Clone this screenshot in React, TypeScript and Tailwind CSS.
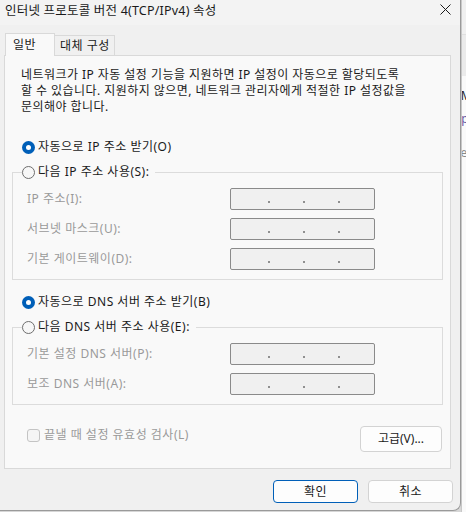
import React from "react";

const font = "font-['Segoe_UI','Noto_Sans','Noto_Sans_CJK_KR',sans-serif]";

function Radio({ checked }: { checked?: boolean }) {
  return checked ? (
    <span className="w-[13px] h-[13px] rounded-full bg-[#005fb8] flex items-center justify-center shrink-0">
      <span className="w-[5px] h-[5px] rounded-full bg-white" />
    </span>
  ) : (
    <span className="w-[13px] h-[13px] rounded-full border border-[#6e6e6e] bg-[#f7f7f7] shrink-0" />
  );
}

function IpBox() {
  return (
    <div className="w-[145px] h-[22px] border border-[#8a8a8a] bg-[#f0f0f0] rounded-[2px] flex items-center">
      <span className="ml-[37px] mt-[6px] w-[2px] h-[2px] bg-[#8f8f8f]" />
      <span className="ml-[33px] mt-[6px] w-[2px] h-[2px] bg-[#8f8f8f]" />
      <span className="ml-[33px] mt-[6px] w-[2px] h-[2px] bg-[#8f8f8f]" />
    </div>
  );
}

function Row({ label }: { label: string }) {
  return (
    <div className="flex items-center h-[22px] pl-[14px]">
      <span className="w-[203px] text-[12px] leading-[16px] tracking-[0.5px] text-[#9a9a9a]">{label}</span>
      <IpBox />
    </div>
  );
}

function Group({ legend, rows }: { legend: string; rows: string[] }) {
  return (
    <fieldset className="ml-[7px] w-[431px] mt-[9px] border border-[#dcdcdc] px-0 pb-[9px]">
      <legend className="ml-[9px] pr-[4px] p-0 h-[16px]">
        <span className="flex items-center gap-[3px] h-[16px] text-[12px] leading-[16px] tracking-[0.5px] text-[#1a1a1a]">
          <Radio />
          <span className="pr-[2px]">{legend}</span>
        </span>
      </legend>
      <div className="mt-[8px] flex flex-col gap-[8px]">
        {rows.map((r) => (
          <Row key={r} label={r} />
        ))}
      </div>
    </fieldset>
  );
}

export default function App() {
  return (
    <div className={`w-[466px] h-[512px] bg-[#d6d6d6] flex overflow-hidden ${font}`}>
      <div className="w-[461px] h-[511px] shrink-0 bg-[#f0f0f0] border-r border-b border-[#9a9a9a] rounded-br-[8px] flex flex-col text-[#1a1a1a]">
        {/* title bar */}
        <div className="h-[25px] bg-[#f3f3f3] flex items-start justify-between">
          <span className="ml-[5px] mt-[3px] text-[12.5px] leading-[16px] tracking-[0.2px]">인터넷 프로토콜 버전 4(TCP/IPv4) 속성</span>
          <svg className="mt-[4px] mr-[9px]" width="11" height="11" viewBox="0 0 11 11">
            <path d="M0.5 0.5 L10.5 10.5 M10.5 0.5 L0.5 10.5" stroke="#1a1a1a" strokeWidth="1" fill="none" />
          </svg>
        </div>
        {/* tabs */}
        <div className="ml-[5px] mt-[8px] h-[23px] flex items-end -mb-px relative z-10">
          <div className="w-[50px] h-[23px] bg-[#f9f9f9] border border-b-0 border-[#d9d9d9] pl-[7px] pt-[3px] text-[12px] leading-[16px] tracking-[0.5px]">
            일반
          </div>
          <div className="w-[60px] h-[20px] mb-[1px] bg-[#f0f0f0] border border-l-0 border-b-0 border-[#d9d9d9] pl-[5px] pt-[2px] text-[12px] leading-[16px] tracking-[0.5px]">
            대체 구성
          </div>
        </div>
        {/* panel */}
        <div className="ml-[4px] w-[447px] h-[414px] border border-[#d9d9d9] bg-[#f9f9f9] flex flex-col">
          <p className="ml-[16px] mt-[11px] text-[12px] leading-[16px] tracking-[0.45px] whitespace-nowrap">
            네트워크가 IP 자동 설정 기능을 지원하면 IP 설정이 자동으로 할당되도록
            <br />
            할 수 있습니다. 지원하지 않으면, 네트워크 관리자에게 적절한 IP 설정값을
            <br />
            문의해야 합니다.
          </p>
          <div className="ml-[17px] mt-[24px] h-[16px] flex items-center gap-[3px] text-[12px] leading-[16px] tracking-[0.5px]">
            <Radio checked />
            <span>자동으로 IP 주소 받기(O)</span>
          </div>
          <Group legend="다음 IP 주소 사용(S):" rows={["IP 주소(I):", "서브넷 마스크(U):", "기본 게이트웨이(D):"]} />
          <div className="ml-[17px] mt-[14px] h-[16px] flex items-center gap-[3px] text-[12px] leading-[16px] tracking-[0.5px]">
            <Radio checked />
            <span>자동으로 DNS 서버 주소 받기(B)</span>
          </div>
          <Group legend="다음 DNS 서버 주소 사용(E):" rows={["기본 설정 DNS 서버(P):", "보조 DNS 서버(A):"]} />
          <div className="mt-[21px] flex justify-between items-start">
            <div className="ml-[22px] mt-[1px] h-[16px] flex items-center gap-[4px]">
              <span className="w-[13px] h-[13px] rounded-[3px] border border-[#c4c4c4] bg-[#f5f5f5]" />
              <span className="text-[12px] leading-[16px] tracking-[0.5px] text-[#9a9a9a]">끝낼 때 설정 유효성 검사(L)</span>
            </div>
            <button className="mr-[8px] w-[82px] h-[26px] rounded-[4px] border border-[#d3d3d3] bg-[#fdfdfd] text-[12px] leading-[16px] text-[#1a1a1a]">
              고급(V)...
            </button>
          </div>
        </div>
        {/* bottom buttons */}
        <div className="mt-[11px] mr-[7px] flex justify-end gap-[10px]">
          <button className="w-[85px] h-[23px] rounded-[4px] border border-[#005fb8] bg-[#fdfdfd] text-[12px] leading-[16px] tracking-[0.5px] text-[#1a1a1a]">
            확인
          </button>
          <button className="w-[85px] h-[23px] rounded-[4px] border border-[#d3d3d3] bg-[#fdfdfd] text-[12px] leading-[16px] tracking-[0.5px] text-[#1a1a1a]">
            취소
          </button>
        </div>
      </div>
      {/* background window strip */}
      <div className="w-[5px] h-[512px] shrink-0 overflow-hidden bg-[#fafafa] flex flex-col border-l border-[#c8c8c8]">
        <div className="h-[35px] bg-[#f0f0f0] border-b border-[#e0e0e0] shrink-0" />
        <div className="h-[41px] bg-[#ebebeb] shrink-0" />
        <div className="ml-[-8px] mt-[12px] text-[12px] leading-[16px] text-[#1a1a1a] whitespace-nowrap">eM</div>
        <div className="ml-[-8px] mt-[7px] text-[12px] leading-[16px] text-[#6b5aa6] whitespace-nowrap">op</div>
        <div className="ml-[-9px] mt-[18px] text-[12px] leading-[16px] text-[#8a8a8a] whitespace-nowrap">net</div>
      </div>
    </div>
  );
}
